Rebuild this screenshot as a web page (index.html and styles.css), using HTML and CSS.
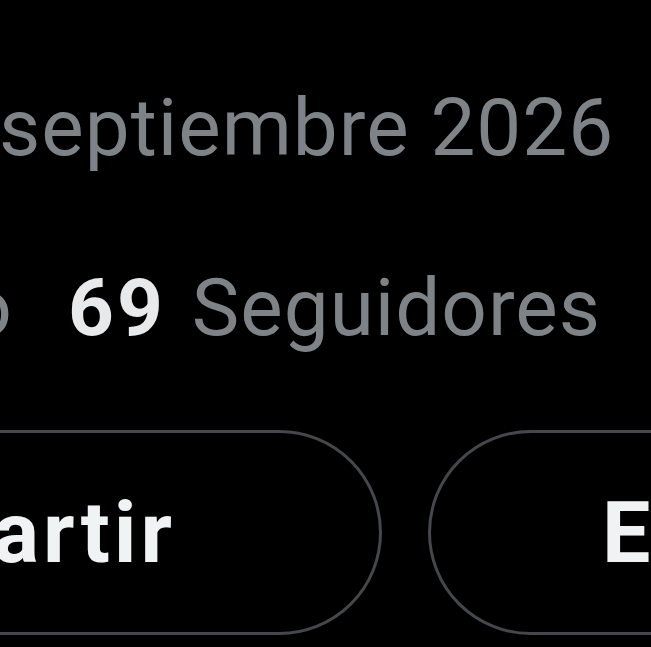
FILE: index.html
```html
<!DOCTYPE html>
<html lang="es">
<head>
<meta charset="utf-8">
<link rel="stylesheet" href="styles.css">
</head>
<body>
<div class="page">
  <div class="joined">septiembre 2026</div>
  <div class="stats">
    <div class="clip"><span class="nowrap"><b class="num">12</b> Siguiendo</span></div>
    <span class="num">69</span>
    <span class="label">Seguidores</span>
  </div>
  <div class="actions">
    <div class="btn btn-left"><span>Compartir</span></div>
    <div class="btn btn-right"><span>Editar perfil</span></div>
  </div>
</div>
</body>
</html>
```
FILE: styles.css
```css
html, body {
  margin: 0;
  padding: 0;
  background: #000;
  overflow: hidden;
}
.page {
  width: 651px;
  height: 647px;
  overflow: hidden;
  font-family: Roboto, "Noto Sans", sans-serif;
  color: #7e8388;
  font-size: 80px;
  line-height: 100px;
  letter-spacing: 1px;
  padding-top: 78px;
  box-sizing: border-box;
}
.joined {
  white-space: nowrap;
  margin-left: -1px;
}
.stats {
  margin-top: 80px;
  display: flex;
  align-items: baseline;
  white-space: nowrap;
}
.clip {
  width: 13px;
  overflow: hidden;
  display: flex;
  justify-content: flex-end;
  flex-shrink: 0;
}
.nowrap { white-space: nowrap; flex-shrink: 0; }
.num {
  color: #e7e9ea;
  font-weight: 700;
  letter-spacing: 3px;
  margin-left: 55px;
  margin-right: 26px;
}
.clip .num { margin: 0; }
.actions {
  margin-top: 72px;
  display: flex;
  gap: 46px;
  margin-left: -300px;
}
.btn {
  flex-shrink: 0;
  height: 205px;
  box-sizing: border-box;
  border: 3px solid #44484c;
  border-radius: 103px;
  display: flex;
  align-items: center;
  color: #eff3f4;
  font-weight: 700;
  font-size: 86px;
  letter-spacing: 4px;
  white-space: nowrap;
}
.btn-left {
  width: 682px;
  justify-content: flex-end;
  padding-right: 203px;
}
.btn-right {
  width: 700px;
  padding-left: 171px;
}
```
